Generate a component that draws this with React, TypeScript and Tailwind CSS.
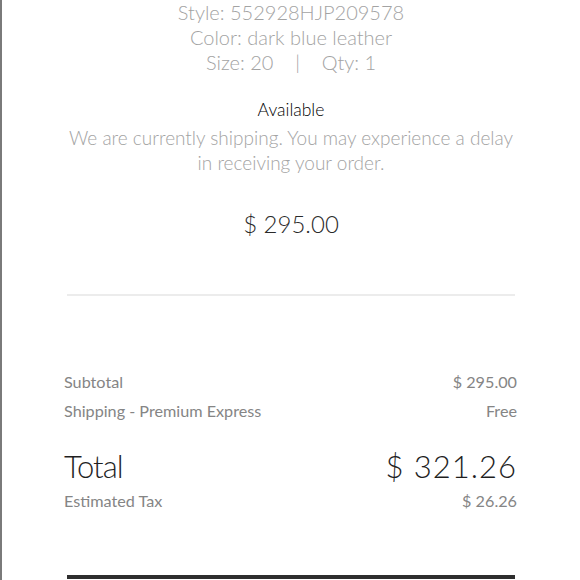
import React from "react";

export default function App() {
  const font = { fontFamily: '"Lato", "Open Sans", sans-serif' };
  return (
    <div
      className="w-[580px] h-[580px] overflow-hidden bg-white border-l-2 border-[#7a7a7a] font-light"
      style={font}
    >
      <div className="w-[452px] ml-[63px] flex flex-col">
        <div className="text-center text-[#a3a3a3] text-[20px] leading-[25px]">
          <div>Style: 552928HJP209578</div>
          <div>Color: dark blue leather</div>
          <div>
            Size: 20 &nbsp;&nbsp;&nbsp;|&nbsp;&nbsp;&nbsp; Qty: 1
          </div>
        </div>
        <div className="mt-[24px] text-center text-black text-[17.5px] leading-[22px]">
          Available
        </div>
        <div className="mt-[4px] text-center text-[#a3a3a3] text-[19px] leading-[25px]">
          We are currently shipping. You may experience a delay
          <br />
          in receiving your order.
        </div>
        <div className="mt-[34px] text-center text-[#2a2a2a] text-[24px] leading-[30px]">
          $ 295.00
        </div>
        <div className="mt-[55px] h-[2px] bg-[#ececec] mx-[2px]" />
        <div className="mt-[71px] flex flex-col text-[#858585] text-[16.2px] leading-[29px] font-normal -ml-[1px]">
          <div className="flex justify-between">
            <span>Subtotal</span>
            <span>$ 295.00</span>
          </div>
          <div className="flex justify-between">
            <span>Shipping - Premium Express</span>
            <span>Free</span>
          </div>
        </div>
        <div className="mt-[21px] flex justify-between items-center text-[#1f1f1f] text-[31px] leading-[40px] -ml-[1px]">
          <span className="tracking-[-1px]">Total</span>
          <span className="tracking-[1px]">$ 321.26</span>
        </div>
        <div className="mt-[3px] flex justify-between text-[#858585] text-[16.2px] leading-[24px] font-normal -ml-[1px]">
          <span>Estimated Tax</span>
          <span>$ 26.26</span>
        </div>
        <div className="mt-[62px] h-[4px] bg-[#2e2e2e] mx-[2px]" />
      </div>
    </div>
  );
}
